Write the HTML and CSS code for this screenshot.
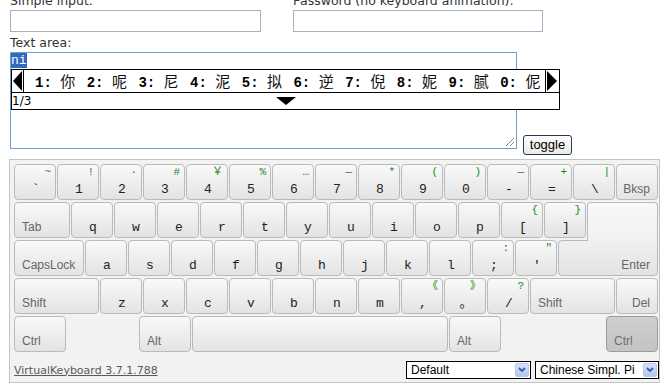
FILE: index.html
```html
<!DOCTYPE html>
<html>
<head>
<meta charset="utf-8">
<link rel="stylesheet" href="styles.css">
</head>
<body>
<div class="page">
  <div class="fields">
    <div class="field">
      <div class="lbl">Simple input:</div>
      <div class="txt"></div>
    </div>
    <div class="field">
      <div class="lbl">Password (no keyboard animation):</div>
      <div class="txt pw"></div>
    </div>
  </div>
  <div class="lbl ta-label">Text area:</div>
  <div class="ta-row">
    <div class="ta-wrap">
      <div class="textarea"><span class="selected">ni</span>
        <svg class="grip" width="12" height="12" viewBox="0 0 12 12"><path d="M11 3 L3 11 M11 7 L7 11" stroke="#8a8a8a" stroke-width="1"/></svg>
      </div>
      <div class="cands">
        <div class="crow">
          <div class="arr left"><svg width="10" height="20" viewBox="0 0 10 20"><polygon points="9,0 9,20 0,10" fill="#000"/></svg></div>
          <div class="clist">
            <span class="cand"><b>1:</b> <span class="zh">你</span></span>
            <span class="cand"><b>2:</b> <span class="zh">呢</span></span>
            <span class="cand"><b>3:</b> <span class="zh">尼</span></span>
            <span class="cand"><b>4:</b> <span class="zh">泥</span></span>
            <span class="cand"><b>5:</b> <span class="zh">拟</span></span>
            <span class="cand"><b>6:</b> <span class="zh">逆</span></span>
            <span class="cand"><b>7:</b> <span class="zh">倪</span></span>
            <span class="cand"><b>8:</b> <span class="zh">妮</span></span>
            <span class="cand"><b>9:</b> <span class="zh">腻</span></span>
            <span class="cand"><b>0:</b> <span class="zh">伲</span></span>
          </div>
          <div class="arr right"><svg width="11" height="20" viewBox="0 0 11 20"><polygon points="1,0 1,20 11,10" fill="#000"/></svg></div>
        </div>
        <div class="crow2">
          <span class="page-no">1/3</span>
          <span class="down"></span>
          <span></span>
        </div>
      </div>
    </div>
    <button class="toggle">toggle</button>
  </div>

  <div class="kb">
    <div class="row">
      <div class="k"><span class="s">~</span><span class="m">`</span></div>
      <div class="k"><span class="s">!</span><span class="m">1</span></div>
      <div class="k"><span class="s">·</span><span class="m">2</span></div>
      <div class="k"><span class="s">#</span><span class="m">3</span></div>
      <div class="k"><span class="s">￥</span><span class="m">4</span></div>
      <div class="k"><span class="s">%</span><span class="m">5</span></div>
      <div class="k"><span class="s">…</span><span class="m">6</span></div>
      <div class="k"><span class="s">—</span><span class="m">7</span></div>
      <div class="k"><span class="s">*</span><span class="m">8</span></div>
      <div class="k"><span class="s">(</span><span class="m">9</span></div>
      <div class="k"><span class="s">)</span><span class="m">0</span></div>
      <div class="k"><span class="s">—</span><span class="m">-</span></div>
      <div class="k"><span class="s">+</span><span class="m">=</span></div>
      <div class="k"><span class="s">|</span><span class="m">\</span></div>
      <div class="k fn"><span class="t r">Bksp</span></div>
    </div>
    <div class="row">
      <div class="k fn tab"><span class="t">Tab</span></div>
      <div class="k"><span class="s"></span><span class="m">q</span></div>
      <div class="k"><span class="s"></span><span class="m">w</span></div>
      <div class="k"><span class="s"></span><span class="m">e</span></div>
      <div class="k"><span class="s"></span><span class="m">r</span></div>
      <div class="k"><span class="s"></span><span class="m">t</span></div>
      <div class="k"><span class="s"></span><span class="m">y</span></div>
      <div class="k"><span class="s"></span><span class="m">u</span></div>
      <div class="k"><span class="s"></span><span class="m">i</span></div>
      <div class="k"><span class="s"></span><span class="m">o</span></div>
      <div class="k"><span class="s"></span><span class="m">p</span></div>
      <div class="k"><span class="s">{</span><span class="m">[</span></div>
      <div class="k"><span class="s">}</span><span class="m">]</span></div>
      <div class="k enter-top"></div>
    </div>
    <div class="row">
      <div class="k fn caps"><span class="t">CapsLock</span></div>
      <div class="k"><span class="s"></span><span class="m">a</span></div>
      <div class="k"><span class="s"></span><span class="m">s</span></div>
      <div class="k"><span class="s"></span><span class="m">d</span></div>
      <div class="k"><span class="s"></span><span class="m">f</span></div>
      <div class="k"><span class="s"></span><span class="m">g</span></div>
      <div class="k"><span class="s"></span><span class="m">h</span></div>
      <div class="k"><span class="s"></span><span class="m">j</span></div>
      <div class="k"><span class="s"></span><span class="m">k</span></div>
      <div class="k"><span class="s"></span><span class="m">l</span></div>
      <div class="k"><span class="s">:</span><span class="m">;</span></div>
      <div class="k"><span class="s">"</span><span class="m">'</span></div>
      <div class="k fn enter-bot"><span class="t r">Enter</span></div>
    </div>
    <div class="row">
      <div class="k fn lshift"><span class="t">Shift</span></div>
      <div class="k"><span class="s"></span><span class="m">z</span></div>
      <div class="k"><span class="s"></span><span class="m">x</span></div>
      <div class="k"><span class="s"></span><span class="m">c</span></div>
      <div class="k"><span class="s"></span><span class="m">v</span></div>
      <div class="k"><span class="s"></span><span class="m">b</span></div>
      <div class="k"><span class="s"></span><span class="m">n</span></div>
      <div class="k"><span class="s"></span><span class="m">m</span></div>
      <div class="k"><span class="s">《</span><span class="m">,</span></div>
      <div class="k"><span class="s">》</span><span class="m">。</span></div>
      <div class="k"><span class="s">?</span><span class="m">/</span></div>
      <div class="k fn rshift"><span class="t">Shift</span></div>
      <div class="k fn"><span class="t r">Del</span></div>
    </div>
    <div class="row">
      <div class="k fn mod"><span class="t">Ctrl</span></div>
      <div class="spacer s1"></div>
      <div class="k fn mod"><span class="t">Alt</span></div>
      <div class="k space"></div>
      <div class="k fn mod"><span class="t">Alt</span></div>
      <div class="spacer s2"></div>
      <div class="k fn mod pressed"><span class="t">Ctrl</span></div>
    </div>
    <div class="foot">
      <span class="ver">VirtualKeyboard 3.7.1.788</span>
      <div class="selbox w1"><span class="seltext">Default</span><span class="selarr"><svg width="8" height="6" viewBox="0 0 8 6"><path d="M1 1 L4 4 L7 1" stroke="#3e5a8f" stroke-width="1.8" fill="none"/></svg></span></div>
      <div class="selbox w2"><span class="seltext">Chinese Simpl. Pi</span><span class="selarr"><svg width="8" height="6" viewBox="0 0 8 6"><path d="M1 1 L4 4 L7 1" stroke="#3e5a8f" stroke-width="1.8" fill="none"/></svg></span></div>
    </div>
  </div>
</div>
</body>
</html>
```
FILE: styles.css
```css
* { box-sizing: border-box; }
body {
  margin: 0;
  background: #fff;
  font-family: "DejaVu Sans", sans-serif;
  color: #333;
}
.page {
  margin-top: -7px;
  padding-left: 10px;
  width: 668px;
}
.fields { display: flex; gap: 32px; }
.field { display: flex; flex-direction: column; }
.lbl {
  font-size: 12.5px;
  line-height: 15px;
  height: 15px;
  white-space: nowrap;
  color: #333;
}
.txt {
  width: 251px;
  height: 22px;
  margin-top: 2px;
  border: 1px solid #a5b3c1;
  background: #fff;
}
.txt.pw { width: 250px; }
.ta-label { margin-top: 3px; }
.ta-row {
  display: flex;
  align-items: flex-end;
  margin-top: 2px;
}
.ta-wrap {
  position: relative;
  width: 507px;
  height: 97px;
  margin-bottom: 6px;
}
.textarea {
  position: relative;
  width: 507px;
  height: 97px;
  border: 1px solid #6f9fcc;
  background: #fff;
}
.selected {
  display: inline-block;
  background: #3169c4;
  color: #fff;
  font: 13px/15px "Liberation Mono", monospace;
  vertical-align: top;
}
.grip { position: absolute; right: 1px; bottom: 1px; }
.cands {
  position: absolute;
  left: 1px;
  top: 17px;
  width: 549px;
  border: 1px solid #000;
  background: #fff;
}
.crow {
  display: flex;
  height: 23px;
  border-bottom: 1px solid #000;
}
.arr {
  display: flex;
  align-items: center;
  flex: none;
}
.arr.left { width: 12px; border-right: 1px solid #000; padding-left: 1px; }
.arr.right { width: 14px; border-left: 1px solid #000; padding-left: 0; }
.clist {
  flex: 1;
  display: flex;
  overflow: hidden;
  padding-left: 11px;
  white-space: nowrap;
}
.cand {
  flex: none;
  width: 51.7px;
  font: bold 14px/22px "Liberation Mono", monospace;
  color: #000;
}
.cand b { font-weight: bold; }
.zh {
  font: 15px/22px "Noto Sans CJK SC", sans-serif;
  font-weight: normal;
  color: #111;
}
.crow2 {
  display: grid;
  grid-template-columns: 1fr auto 1fr;
  align-items: center;
  height: 16px;
}
.page-no {
  font: 12px/16px "DejaVu Sans", sans-serif;
  color: #000;
}
.down {
  width: 0;
  height: 0;
  border-left: 10px solid transparent;
  border-right: 10px solid transparent;
  border-top: 8px solid #000;
}
.toggle {
  margin-left: 6px;
  width: 49px;
  height: 20px;
  padding: 0;
  border: 1px solid #27394e;
  border-radius: 3px;
  background: linear-gradient(#ffffff, #ebeae4);
  font: 13px/18px "Liberation Sans", sans-serif;
  color: #000;
}

/* keyboard */
.kb {
  margin-top: 4px;
  margin-left: -1px;
  width: 651px;
  height: 224px;
  border: 1px solid #c4c4c4;
  background: #f2f2f2;
  padding: 4px 0 0 4px;
}
.row {
  display: flex;
  height: 36px;
  margin-bottom: 2px;
}
.k {
  flex: none;
  width: 42px;
  height: 36px;
  margin-right: 1px;
  border: 1px solid #bababa;
  border-radius: 4px;
  background: linear-gradient(#f9f9f9, #e3e3e3);
  display: flex;
  flex-direction: column;
}
.s {
  align-self: flex-end;
  height: 13px;
  margin: 1px 4px 0 0;
  font: 11px/13px "Liberation Mono", "Noto Sans CJK SC", monospace;
  color: #17871a;
}
.m {
  margin-top: auto;
  text-align: center;
  padding: 0 0 3px 2px;
  font: 13px/12px "Liberation Mono", "Noto Sans CJK SC", monospace;
  color: #222;
}
.fn { justify-content: flex-end; }
.t {
  font: 12px/14px "Liberation Sans", sans-serif;
  color: #666;
  padding: 0 0 3px 7px;
}
.t.r { text-align: right; padding: 0 7px 3px 0; }
.tab { width: 56px; }
.caps { width: 70px; }
.lshift { width: 85px; }
.rshift { width: 85px; }
.mod { width: 52px; }
.space { width: 256px; }
.spacer { flex: none; }
.spacer.s1 { width: 72px; }
.spacer.s2 { width: 104px; }
.enter-top {
  width: 71px;
  height: 39px;
  border-bottom: none;
  border-radius: 4px 4px 0 0;
  background: linear-gradient(#f9f9f9, #f0f0f0);
  position: relative;
  z-index: 1;
}
.enter-bot {
  width: 100px;
  border-radius: 4px 0 4px 4px;
  background: linear-gradient(#f0f0f0, #e3e3e3);
}
.pressed {
  background: linear-gradient(#cfcfcf, #c3c3c3);
  border-color: #9c9c9c;
}
.pressed .t { color: #6f6f6f; }
.foot {
  display: flex;
  align-items: center;
  height: 18px;
  margin-top: 9px;
  gap: 4px;
}
.ver {
  margin-right: auto;
  font: 11px/13px "DejaVu Sans", sans-serif;
  color: #5a5a5a;
  text-decoration: underline;
}
.selbox {
  display: flex;
  align-items: center;
  height: 18px;
  border: 1px solid #000;
  background: #fff;
  padding: 0 1px 0 4px;
}
.selbox.w1 { width: 125px; }
.selbox.w2 { width: 124px; }
.seltext {
  flex: 1;
  overflow: hidden;
  white-space: nowrap;
  font: 12px/16px "Liberation Sans", sans-serif;
  color: #000;
}
.selarr {
  flex: none;
  width: 14px;
  height: 14px;
  border: 1px solid #b4c8f0;
  border-radius: 2px;
  background: linear-gradient(#d4e1fc, #b3c7f3);
  display: flex;
  align-items: center;
  justify-content: center;
}
```
